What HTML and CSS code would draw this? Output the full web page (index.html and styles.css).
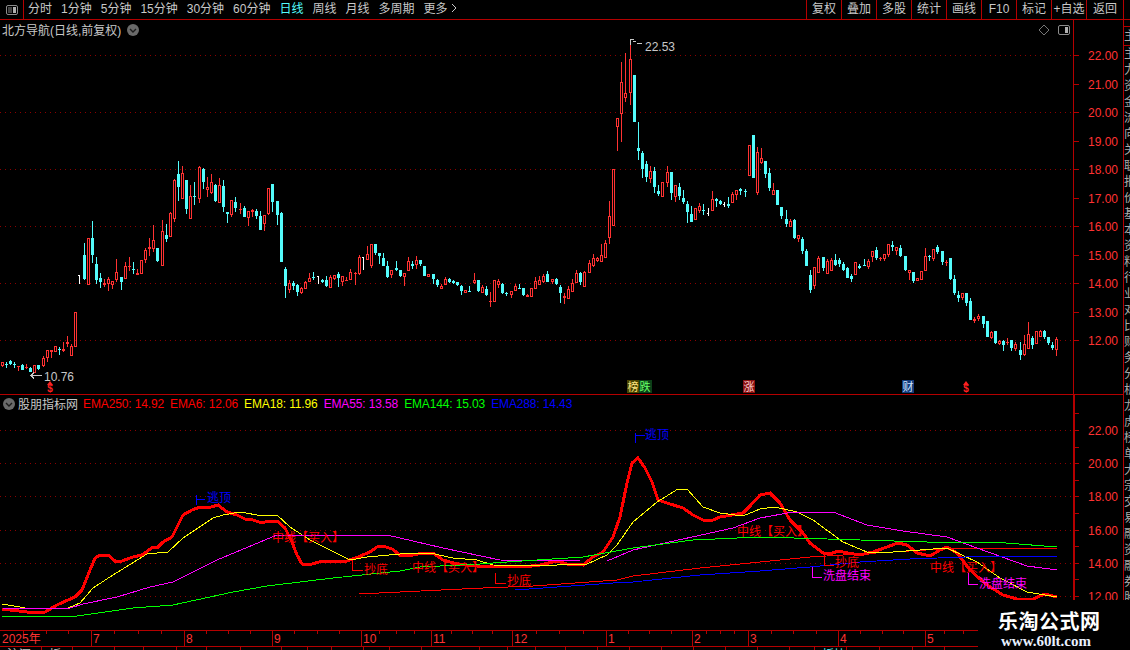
FILE: index.html
```html
<!DOCTYPE html>
<html lang="zh-CN">
<head>
  <meta charset="UTF-8" />
  <title>北方导航 日线</title>
  <link rel="stylesheet" href="styles.css">
</head>
<body>
  <div class="app">
    <!-- Top toolbar -->
    <div class="toolbar">
      <div class="panel-toggle">
        <svg class="toggle-icon" viewBox="0 0 12 10"><rect x="0.5" y="0.5" width="11" height="9" rx="1.5" class="toggle-frame"/><rect x="2" y="2" width="4" height="6" class="toggle-left"/><rect x="7" y="2" width="3" height="6" class="toggle-right"/></svg>
      </div>
      <nav class="periods">
        <span>分时</span>
        <span>1分钟</span>
        <span>5分钟</span>
        <span>15分钟</span>
        <span>30分钟</span>
        <span>60分钟</span>
        <span class="active">日线</span>
        <span>周线</span>
        <span>月线</span>
        <span>多周期</span>
        <span>更多 <svg class="more-arrow" viewBox="0 0 6 10"><path d="M1 1 L5 5 L1 9"/></svg></span>
      </nav>
      <nav class="tools">
        <span>复权</span>
        <span>叠加</span>
        <span>多股</span>
        <span>统计</span>
        <span>画线</span>
        <span>F10</span>
        <span>标记</span>
        <span>+自选</span>
        <span>返回</span>
      </nav>
    </div>

    <div class="workspace">
      <div class="charts">
        <!-- Price panel -->
        <section class="price-panel">
          <div class="panel-head">
            <span class="stock-title">北方导航(日线,前复权)</span>
            <svg class="round-btn" viewBox="0 0 12 12"><circle cx="6" cy="6" r="6"/><path d="M3 5 L6 8 L9 5"/></svg>
            <span class="head-icons">
              <svg class="diamond" viewBox="0 0 12 12"><path d="M6 1 L11 6 L6 11 L1 6 Z"/></svg>
              <svg class="toggle-icon" viewBox="0 0 12 10"><rect x="0.5" y="0.5" width="11" height="9" rx="1.5" class="toggle-frame"/><rect x="7" y="2" width="3" height="6" class="toggle-right"/></svg>
            </span>
            <span class="axis-cap"></span>
          </div>
          <svg id="price-chart" class="price-svg" viewBox="0 39 1123 355"></svg>
        </section>

        <!-- Indicator panel -->
        <section class="indicator-panel">
          <div class="panel-head indicator-head">
            <svg class="round-btn" viewBox="0 0 12 12"><circle cx="6" cy="6" r="6"/><path d="M3 5 L6 8 L9 5"/></svg>
            <span class="indicator-name">股朋指标网</span>
            <span class="ema red">EMA250: 14.92</span>
            <span class="ema red">EMA6: 12.06</span>
            <span class="ema yellow">EMA18: 11.96</span>
            <span class="ema magenta">EMA55: 13.58</span>
            <span class="ema green">EMA144: 15.03</span>
            <span class="ema blue">EMA288: 14.43</span>
            <span class="axis-cap"></span>
          </div>
          <svg id="indicator-chart" class="indicator-svg" viewBox="0 412 1123 218"></svg>
        </section>

        <!-- Time axis and bottom tabs -->
        <svg id="time-axis" class="time-svg" viewBox="0 631 1123 15"></svg>
        <div id="bottom-tabs" class="bottom-tabs"></div>
      </div>

      <!-- Clipped tabs on the window edge -->
      <div class="side-strip">
        <div class="side-tab first"></div>
        <div class="side-tab">主</div>
        <div class="side-text">主力资金流向关联报价基本资料行业对比财务分析龙虎榜单大宗交易融资融券股东研究</div>
      </div>
    </div>

    <!-- Site watermark -->
    <div class="watermark">
      <div class="mark-name">乐淘公式网</div>
      <div class="mark-url">www.60lt.com</div>
    </div>
  </div>

  <script src="chart.js"></script>
</body>
</html>
```

FILE: styles.css
```css
/* General Styles */
* {
  box-sizing: border-box;
}

body {
  margin: 0;
  background-color: #000;
  font-family: "Liberation Sans", "Noto Sans CJK SC", sans-serif;
  font-size: 12px;
  color: #c8c8c8;
}

.app {
  position: relative;
  width: 1130px;
  height: 650px;
  overflow: hidden;
  background-color: #000;
}

svg {
  display: block;
}

/* Toolbar */
.toolbar {
  display: flex;
  height: 20px;
  border-bottom: 1px solid #b40000;
  padding-right: 6px;
  line-height: 19px;
}

.panel-toggle {
  display: flex;
  align-items: center;
  justify-content: center;
  width: 24px;
  border-right: 1px solid #b40000;
}

.toggle-icon {
  width: 12px;
  height: 10px;
}

.toggle-frame {
  fill: none;
  stroke: #8c8c8c;
}

.toggle-left {
  fill: #444;
}

.toggle-right {
  fill: #b0b0b0;
}

.periods {
  display: flex;
  gap: 9px;
  margin-left: 4px;
}

.periods .active {
  color: #54fcfc;
}

.more-arrow {
  display: inline-block;
  width: 6px;
  height: 10px;
  fill: none;
  stroke: #c8c8c8;
}

.tools {
  display: flex;
  margin-left: auto;
}

.tools span {
  width: 35px;
  border-left: 1px solid #b40000;
  text-align: center;
  white-space: nowrap;
}

.tools span:last-child {
  width: 38px;
  border-right: 1px solid #b40000;
}

/* Workspace */
.workspace {
  display: flex;
  height: 630px;
}

.charts {
  width: 1123px;
}

.panel-head {
  display: flex;
  align-items: center;
  height: 19px;
}

.stock-title {
  margin-left: 2px;
}

.round-btn {
  width: 12px;
  height: 12px;
  margin-left: 6px;
}

.round-btn circle {
  fill: #6a6a6a;
}

.round-btn path {
  fill: none;
  stroke: #1c1c1c;
  stroke-width: 1.4;
}

.head-icons {
  display: flex;
  align-items: center;
  gap: 8px;
  margin-left: auto;
  margin-right: 3px;
}

.diamond {
  width: 12px;
  height: 12px;
  fill: none;
  stroke: #777;
}

.axis-cap {
  align-self: stretch;
  width: 50px;
  border-left: 1px solid #b40000;
}

.indicator-head .axis-cap {
  margin-left: auto;
  border-left-width: 2px;
}

.price-panel {
  height: 375px;
  border-bottom: 1px solid #b40000;
}

.price-svg {
  width: 1123px;
  height: 355px;
}

.indicator-panel {
  height: 236px;
  border-bottom: 1px solid #b40000;
}

.indicator-head {
  height: 17px;
}

.indicator-head .round-btn {
  margin-left: 3px;
}

.indicator-name {
  margin-left: 3px;
  margin-right: 5px;
}

.ema {
  margin-right: 6px;
  letter-spacing: -0.13px;
}

.red {
  color: #ff0000;
}

.yellow {
  color: #ffff00;
}

.magenta {
  color: #ff00ff;
}

.green {
  color: #00ff00;
}

.blue {
  color: #0000ff;
}

.indicator-svg {
  width: 1123px;
  height: 218px;
}

.time-svg {
  width: 1123px;
  height: 15px;
}

.bottom-tabs {
  display: flex;
  height: 4px;
  overflow: hidden;
  border-top: 1px solid #b40000;
  line-height: 16px;
}

.bottom-tabs span {
  flex: none;
  padding-left: 7px;
  border-right: 1px solid #b40000;
  white-space: nowrap;
}

.bottom-tabs .current {
  color: #54fcfc;
}

/* Right edge strip */
.side-strip {
  width: 7px;
  overflow: hidden;
  border-left: 1px solid #b40000;
  color: #aaa;
}

.side-tab {
  width: 6px;
  height: 19px;
  overflow: hidden;
  border-bottom: 1px solid #b40000;
  line-height: 18px;
  white-space: nowrap;
}

.side-tab.first {
  height: 7px;
}

.side-text {
  width: 12px;
  line-height: 16px;
  word-break: break-all;
}

/* Watermark */
.watermark {
  position: absolute;
  right: 0;
  bottom: 0;
  width: 152px;
  height: 50px;
  padding: 9px 0 0 20px;
  background-color: #000;
  color: #fff;
}

.mark-name {
  font-family: "Noto Sans CJK SC", sans-serif;
  font-size: 20px;
  font-weight: bold;
  line-height: 24px;
  letter-spacing: 0.5px;
}

.mark-url {
  margin: 1px 0 0 3px;
  font-family: "Liberation Serif", serif;
  font-size: 15px;
  font-weight: bold;
  line-height: 14px;
  color: #e8f0ff;
}

/* Chart parts drawn by chart.js */
.grid-line {
  stroke: #8c0000;
  stroke-dasharray: 1 4;
  shape-rendering: crispEdges;
}

.axis-line {
  stroke: #b40000;
  shape-rendering: crispEdges;
}

.axis-label {
  fill: #ff3232;
  font-size: 12px;
}

.price-note {
  fill: #c8c8c8;
  font-size: 12px;
}

.note-arrow {
  fill: none;
  stroke: #c8c8c8;
  shape-rendering: crispEdges;
}

.ema-line {
  fill: none;
  stroke-width: 1;
  shape-rendering: crispEdges;
}

.ema-thick {
  stroke-width: 3;
}

.signal-text {
  font-size: 12px;
}

.signal-hook {
  fill: none;
  stroke-width: 1;
  shape-rendering: crispEdges;
}

.tag-text {
  font-size: 11px;
}

.money-mark {
  fill: #ff2020;
  font-size: 10px;
  font-weight: bold;
}
```

FILE: chart.js
```js
// Page y values for the candles: [high, body top, body bottom, low, type]
// r = up (hollow red), c = down (solid cyan), w = flat (white)
const CANDLES = [
  [362,362,366,367,'r'],[362,364,365,368,'c'],[360,361,364,365,'c'],[362,364,365,368,'c'],[366,366,367,371,'r'],
  [364,365,370,370,'c'],[364,367,368,369,'r'],[367,368,372,372,'c'],[365,365,373,373,'r'],[365,365,369,370,'c'],
  [356,358,366,367,'r'],[350,350,358,362,'r'],[350,350,352,358,'r'],[346,346,352,352,'r'],[347,349,350,355,'c'],
  [342,349,351,352,'r'],[336,342,344,347,'r'],[344,346,356,356,'r'],[312,312,347,347,'r'],[275,275,276,284,'w'],
  [243,255,279,280,'c'],[238,238,285,285,'r'],[221,238,255,263,'c'],[257,264,280,284,'c'],[273,278,282,288,'c'],
  [279,283,285,287,'r'],[277,279,284,291,'r'],[281,281,285,289,'r'],[259,272,280,282,'r'],[277,277,282,290,'c'],
  [262,266,279,279,'r'],[257,266,267,271,'r'],[262,269,270,274,'c'],[269,273,275,275,'r'],[260,260,274,274,'r'],
  [248,250,260,263,'r'],[238,247,249,256,'r'],[225,240,249,252,'r'],[248,248,261,262,'c'],[220,231,266,266,'r'],
  [224,235,239,242,'c'],[212,213,237,237,'r'],[179,180,219,222,'r'],[161,174,187,201,'c'],[166,173,199,199,'r'],
  [180,180,209,214,'c'],[185,196,219,219,'r'],[182,196,197,205,'c'],[166,167,199,203,'r'],[168,169,182,189,'c'],
  [177,187,190,197,'r'],[174,182,193,194,'r'],[184,185,201,202,'c'],[178,185,203,203,'r'],[180,186,207,212,'c'],
  [212,212,214,223,'c'],[200,200,215,217,'r'],[197,202,208,212,'c'],[203,209,210,214,'r'],[206,208,217,217,'c'],
  [211,211,218,226,'r'],[209,210,212,217,'r'],[209,211,216,219,'c'],[211,216,230,230,'c'],[215,215,224,231,'r'],
  [188,188,214,215,'r'],[184,184,202,212,'c'],[201,201,215,225,'c'],[212,213,262,262,'c'],[267,269,286,298,'c'],
  [280,283,290,293,'r'],[281,283,286,290,'c'],[284,285,292,296,'c'],[287,288,293,294,'r'],[281,282,289,289,'r'],
  [273,278,282,282,'r'],[272,277,278,280,'c'],[276,276,277,284,'w'],[279,280,282,283,'c'],[276,280,286,287,'c'],
  [275,277,288,288,'r'],[275,275,279,280,'r'],[272,274,278,287,'c'],[276,276,282,286,'r'],[277,280,281,281,'r'],
  [269,272,280,280,'r'],[272,273,274,285,'r'],[255,257,274,275,'r'],[257,257,258,270,'w'],[246,254,260,260,'r'],
  [244,244,266,268,'r'],[244,244,253,255,'c'],[253,253,256,264,'c'],[253,258,266,266,'c'],[261,266,277,278,'c'],
  [270,270,275,278,'r'],[261,268,270,271,'c'],[270,270,276,277,'c'],[273,273,277,286,'r'],[257,261,271,271,'r'],
  [261,264,266,269,'c'],[256,260,265,269,'r'],[260,260,264,266,'c'],[266,266,276,276,'c'],[274,274,277,277,'r'],
  [274,274,279,284,'c'],[279,280,285,287,'c'],[284,286,289,289,'r'],[277,279,285,285,'r'],[278,279,282,283,'c'],
  [280,281,283,284,'c'],[282,282,285,286,'c'],[285,286,291,295,'c'],[290,290,293,293,'r'],[286,291,292,292,'c'],
  [273,280,283,284,'r'],[280,280,291,292,'c'],[285,287,293,293,'r'],[286,289,295,296,'c'],[292,301,302,307,'r'],
  [280,280,302,302,'r'],[279,281,285,288,'r'],[283,284,293,294,'c'],[292,293,294,296,'c'],[291,291,295,298,'r'],
  [284,286,291,291,'r'],[284,288,289,289,'c'],[288,288,295,296,'c'],[294,295,297,297,'r'],[288,288,297,297,'r'],
  [277,281,289,289,'r'],[276,280,285,285,'r'],[274,276,282,283,'r'],[271,274,282,282,'c'],[279,279,282,284,'r'],
  [278,279,284,285,'c'],[285,287,293,303,'c'],[293,296,298,304,'r'],[286,289,299,299,'r'],[279,283,292,292,'r'],
  [270,273,283,283,'r'],[272,273,282,285,'c'],[271,272,287,287,'r'],[260,263,273,273,'r'],[254,258,266,267,'r'],
  [257,258,261,262,'r'],[244,255,262,262,'r'],[240,243,258,258,'r'],[201,216,238,244,'r'],[169,169,226,226,'r'],
  [118,118,127,151,'r'],[62,82,114,142,'r'],[53,93,98,102,'r'],[43,59,93,105,'r'],[75,75,122,122,'c'],
  [122,148,151,160,'c'],[151,153,169,178,'c'],[161,164,177,182,'c'],[166,171,179,183,'r'],[167,171,187,193,'c'],
  [185,191,194,196,'c'],[182,182,197,197,'r'],[166,172,183,187,'r'],[172,172,193,200,'c'],[185,185,197,202,'r'],
  [183,187,196,200,'c'],[190,198,202,204,'c'],[201,204,212,223,'c'],[206,214,222,222,'c'],[208,208,220,220,'r'],
  [203,206,211,213,'r'],[204,210,211,215,'c'],[208,213,214,216,'w'],[191,199,211,211,'r'],[198,199,201,207,'c'],
  [200,201,204,205,'c'],[202,204,205,207,'w'],[197,204,206,208,'c'],[192,194,203,203,'r'],[190,190,195,200,'r'],
  [188,189,191,195,'c'],[189,191,192,197,'c'],[145,145,176,176,'r'],[135,135,178,178,'c'],[147,152,193,195,'r'],
  [148,158,163,164,'r'],[161,161,174,178,'c'],[168,173,188,191,'c'],[183,190,195,195,'r'],[190,190,205,205,'c'],
  [207,207,216,219,'c'],[210,219,224,227,'c'],[219,221,227,227,'r'],[219,220,238,239,'c'],[235,235,239,242,'r'],
  [237,239,251,254,'c'],[249,251,266,266,'c'],[270,275,290,293,'c'],[267,267,286,289,'r'],[256,258,273,273,'r'],
  [257,257,268,271,'c'],[259,261,274,274,'r'],[258,260,271,271,'r'],[254,260,265,266,'c'],[258,260,264,267,'c'],
  [262,264,270,271,'c'],[267,268,278,278,'c'],[274,276,279,282,'c'],[262,262,275,275,'r'],[264,266,268,269,'c'],
  [259,265,266,266,'c'],[259,261,267,269,'r'],[251,251,257,262,'r'],[247,250,258,260,'c'],[257,258,259,261,'r'],
  [254,254,259,261,'r'],[244,244,255,257,'r'],[241,245,247,251,'c'],[247,247,251,255,'r'],[245,248,256,257,'c'],
  [256,256,270,271,'c'],[270,270,273,280,'r'],[272,272,281,283,'c'],[278,278,281,281,'r'],[271,271,280,280,'r'],
  [248,256,271,271,'r'],[255,256,257,261,'c'],[249,249,259,261,'r'],[245,247,252,254,'c'],[251,251,262,265,'c'],
  [260,262,263,266,'r'],[258,258,279,280,'c'],[275,279,293,295,'c'],[291,295,298,302,'c'],[293,293,298,300,'r'],
  [293,293,303,306,'c'],[298,301,320,320,'c'],[317,319,321,323,'r'],[314,316,319,321,'r'],[316,316,324,328,'c'],
  [321,321,337,337,'c'],[331,332,338,339,'r'],[331,331,343,344,'c'],[340,341,344,345,'r'],[340,341,345,351,'c'],
  [338,342,343,345,'r'],[340,340,348,351,'c'],[342,344,349,351,'r'],[342,350,355,360,'c'],[335,344,355,356,'r'],
  [322,334,349,349,'r'],[336,338,345,349,'c'],[331,331,344,344,'r'],[330,331,337,337,'r'],[330,331,337,339,'c'],
  [337,337,343,345,'c'],[342,345,348,350,'c'],[337,339,350,356,'r']
];

// Indicator lines as page coordinates
const EMA_LINES = [
  { color: '#ff0000', points: '359,594 400,592 483,588 533,586 617,580 633,576 700,568 760,562 810,557 893,552 943,549 1057,548' },
  { color: '#ff0000', thick: true, points: '2,609 27,612 45,612 57,605 68,600 75,597 82,590 88,575 95,558 100,555 108,555 115,561 122,561 133,557 142,555 153,547 158,547 163,542 172,537 177,527 183,515 192,510 200,507 208,508 218,505 227,512 237,515 245,519 253,520 262,523 268,521 277,521 285,528 292,542 297,555 302,564 308,565 323,561 347,561 358,557 370,552 377,547 383,546 392,549 400,555 413,555 423,553 433,553 443,560 457,564 477,566 500,566 523,567 540,565 557,561 567,564 583,565 593,557 603,552 613,537 620,517 627,483 632,463 638,458 645,468 652,482 658,500 667,503 683,508 693,515 705,521 713,520 720,517 743,513 750,506 760,495 770,493 780,503 790,520 803,533 810,543 823,553 830,554 838,551 848,553 860,555 873,552 887,547 898,543 907,545 917,553 930,556 940,550 947,547 957,553 970,570 987,585 1003,595 1017,599 1033,599 1045,594 1057,597' },
  { color: '#ffff00', points: '2,604 20,607 30,609 68,608 80,603 93,588 113,575 147,554 168,552 183,538 213,518 223,515 240,512 263,516 277,515 290,527 310,540 350,560 367,557 400,554 417,553 430,553 453,558 477,560 493,565 533,566 557,565 587,564 607,555 617,545 633,522 657,502 678,489 687,489 703,507 720,513 743,516 760,509 775,507 797,512 813,520 843,542 867,552 893,552 947,548 977,562 1000,578 1027,592 1057,597' },
  { color: '#ff00ff', points: '2,608 67,609 83,604 117,597 150,587 173,582 217,560 277,535 387,535 400,538 443,548 500,560 580,561 607,561 633,550 683,539 733,528 760,518 793,512 833,512 867,525 903,531 947,537 977,548 1027,566 1057,570' },
  { color: '#00ff00', points: '2,616 77,616 133,608 173,605 233,592 267,586 333,578 400,571 420,567 480,564 507,562 583,557 633,548 693,540 760,537 827,539 927,542 993,542 1057,547' },
  { color: '#0000ff', points: '515,590 613,583 633,582 700,575 760,571 810,567 860,562 910,559 993,556 1057,556' }
];

// Signal labels under the indicator lines
const SIGNALS = [
  { text: '逃顶', x: 207, y: 502, color: '#0000ff', hook: 'M196 495 V505 M196 499 H205' },
  { text: '逃顶', x: 645, y: 439, color: '#0000ff', hook: 'M635 433 V443 M635 435 H645' },
  { text: '中线【买入】', x: 272, y: 542, color: '#ff0000' },
  { text: '中线【买入】', x: 412, y: 572, color: '#ff0000' },
  { text: '中线【买入】', x: 737, y: 536, color: '#ff0000' },
  { text: '中线【买入】', x: 930, y: 572, color: '#ff0000' },
  { text: '抄底', x: 364, y: 574, color: '#ff0000', hook: 'M352 560 V570 H363' },
  { text: '抄底', x: 507, y: 585, color: '#ff0000', hook: 'M495 573 V583 H506' },
  { text: '抄底', x: 835, y: 567, color: '#ff0000', hook: 'M824 555 V565 H834' },
  { text: '洗盘结束', x: 823, y: 580, color: '#ff00ff', hook: 'M812 567 V577 H822' },
  { text: '洗盘结束', x: 979, y: 588, color: '#ff00ff', hook: 'M968 573 V584 H978' }
];

const MONTHS = [
  { label: '2025年', x: 0 }, { label: '7', x: 91 }, { label: '8', x: 184 }, { label: '9', x: 272 },
  { label: '10', x: 361 }, { label: '11', x: 431 }, { label: '12', x: 512 }, { label: '1', x: 606 },
  { label: '2', x: 692 }, { label: '3', x: 748 }, { label: '4', x: 838 }, { label: '5', x: 925 }
];

// Bottom tab strip: only the tops of the tabs show above the window edge
const BOTTOM_TABS = [
  { width: 42, text: '沪深' }, { width: 31, text: '板' }, { width: 42 }, { width: 29 }, { width: 33 },
  { width: 30 }, { width: 34 }, { width: 41 }, { width: 26 }, { width: 24 }, { width: 32 }, { width: 26 },
  { width: 32 }, { width: 58 }, { width: 28 }, { width: 28 }, { width: 30 }, { width: 32 }, { width: 32 },
  { width: 32 }, { width: 32 }, { width: 32 }, { width: 32 }, { width: 32 }, { width: 25 },
  { width: 32, text: '板块', current: true }, { width: 33 }, { width: 33 }, { width: 32 }
];

function add(parent, name, attrs, text) {
  const node = document.createElementNS('http://www.w3.org/2000/svg', name);
  Object.keys(attrs).forEach((key) => node.setAttribute(key, attrs[key]));
  if (text) node.textContent = text;
  parent.appendChild(node);
  return node;
}

function drawCandle(svg, candle, i) {
  const [high, top, bottom, low, type] = candle;
  const x = Math.floor(2 + 4.105 * i);
  const color = { r: '#ff3232', c: '#54fcfc', w: '#ffffff' }[type];
  const height = bottom - top;

  if (type === 'w') {
    add(svg, 'rect', { x: x, y: high, width: 1, height: low - high, fill: color });
    add(svg, 'rect', { x: x - 1, y: top, width: 1, height: 1, fill: color });
  } else if (type === 'c' || height < 3) {
    add(svg, 'rect', { x: x, y: high, width: 1, height: low - high, fill: color });
    add(svg, 'rect', { x: x - 1, y: top, width: 3, height: Math.max(height, 1), fill: color });
  } else {
    if (top > high) add(svg, 'rect', { x: x, y: high, width: 1, height: top - high, fill: color });
    if (low > bottom) add(svg, 'rect', { x: x, y: bottom, width: 1, height: low - bottom, fill: color });
    add(svg, 'rect', { x: x - 0.5, y: top + 0.5, width: 2, height: height - 1, fill: 'none', stroke: color });
  }
}

// Dotted grid, axis line, ticks and labels for one panel
function drawScale(svg, opts) {
  const axisX = opts.axisWidth === 2 ? 1074 : 1073.5;
  add(svg, 'line', { x1: axisX, y1: opts.top, x2: axisX, y2: opts.bottom, 'stroke-width': opts.axisWidth, class: 'axis-line' });
  opts.ticks.forEach((p) => {
    const y = Math.round(opts.y22 + opts.perUnit * (22 - p)) + 0.5;
    add(svg, 'line', { x1: 1074, y1: y, x2: 1079, y2: y, class: 'axis-line' });
    if (opts.labels.includes(p)) {
      add(svg, 'text', { x: 1088, y: y + 4, class: 'axis-label' }, p.toFixed(2));
    }
    if (p % 2 === 0) {
      add(svg, 'line', { x1: 0, y1: y, x2: 1073, y2: y, class: 'grid-line' });
    }
  });
}

function drawTag(svg, x, width, text, bg, fg) {
  add(svg, 'rect', { x: x, y: 380, width: width, height: 13, fill: bg });
  add(svg, 'text', { x: x + 0.5, y: 391, fill: fg, class: 'tag-text' }, text);
}

function drawMoneyMark(svg, x) {
  add(svg, 'path', { d: `M${x - 3} 385 L${x} 381 L${x + 3} 385 Z`, fill: '#ff2020' });
  add(svg, 'text', { x: x, y: 392, 'text-anchor': 'middle', class: 'money-mark' }, '$');
}

// Price panel
const priceSvg = document.getElementById('price-chart');
drawScale(priceSvg, {
  top: 39, bottom: 394, axisWidth: 1, y22: 55, perUnit: 28.5,
  ticks: [22, 21, 20, 19, 18, 17, 16, 15, 14, 13, 12],
  labels: [22, 21, 20, 19, 18, 17, 16, 15, 14, 13, 12]
});
CANDLES.forEach((candle, i) => drawCandle(priceSvg, candle, i));

add(priceSvg, 'text', { x: 645, y: 51, class: 'price-note' }, '22.53');
add(priceSvg, 'path', { d: 'M630.5 39 V45 M631 39 H634 M633 41 L636 42 M637 43 L642 44', class: 'note-arrow' });
add(priceSvg, 'text', { x: 44, y: 381, class: 'price-note' }, '10.76');
add(priceSvg, 'path', { d: 'M42 375.5 H31 M34 372.5 L31 375.5 L34 378.5', class: 'note-arrow' });

drawMoneyMark(priceSvg, 50);
drawMoneyMark(priceSvg, 966);
drawTag(priceSvg, 627, 12, '榜', '#4a4300', '#ffe680');
drawTag(priceSvg, 639, 13, '跌', '#0c3f18', '#66ff66');
drawTag(priceSvg, 743, 12, '涨', '#8a1010', '#ffd0d0');
drawTag(priceSvg, 902, 12, '财', '#123a7a', '#d0e4ff');

// Indicator panel
const indicatorSvg = document.getElementById('indicator-chart');
drawScale(indicatorSvg, {
  top: 412, bottom: 630, axisWidth: 2, y22: 430, perUnit: 16.6,
  ticks: [23, 22, 21, 20, 19, 18, 17, 16, 15, 14, 13, 12],
  labels: [22, 20, 18, 16, 14, 12]
});
EMA_LINES.forEach((line) => {
  add(indicatorSvg, 'polyline', {
    points: line.points,
    stroke: line.color,
    class: line.thick ? 'ema-line ema-thick' : 'ema-line'
  });
});
SIGNALS.forEach((signal) => {
  add(indicatorSvg, 'text', { x: signal.x, y: signal.y, fill: signal.color, class: 'signal-text' }, signal.text);
  if (signal.hook) {
    add(indicatorSvg, 'path', { d: signal.hook, stroke: signal.color, class: 'signal-hook' });
  }
});

// Time axis: a tall tick and label per month, three short ticks between
const timeSvg = document.getElementById('time-axis');
MONTHS.forEach((month, i) => {
  if (i > 0) {
    add(timeSvg, 'line', { x1: month.x + 0.5, y1: 631, x2: month.x + 0.5, y2: 646, class: 'axis-line' });
  }
  add(timeSvg, 'text', { x: month.x + 2, y: 643, class: 'axis-label' }, month.label);
  const next = i + 1 < MONTHS.length ? MONTHS[i + 1].x : 1000;
  for (let t = 1; t <= 3; t++) {
    const x = Math.round(month.x + ((next - month.x) * t) / 4) + 0.5;
    add(timeSvg, 'line', { x1: x, y1: 631, x2: x, y2: 634, class: 'axis-line' });
  }
});

// Bottom tabs
const tabBar = document.getElementById('bottom-tabs');
BOTTOM_TABS.forEach((tab) => {
  const item = document.createElement('span');
  item.style.width = `${tab.width}px`;
  if (tab.text) item.textContent = tab.text;
  if (tab.current) item.classList.add('current');
  tabBar.appendChild(item);
});
```
